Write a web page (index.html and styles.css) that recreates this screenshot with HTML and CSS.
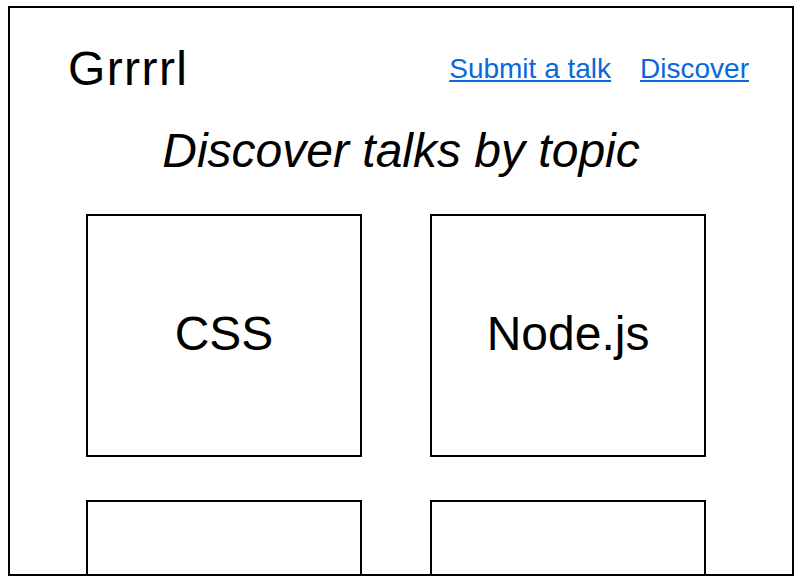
FILE: index.html
```html
<!DOCTYPE html>
<html lang="en">
<head>
<meta charset="utf-8">
<title>Grrrrl</title>
<link rel="stylesheet" href="styles.css">
</head>
<body>
<div class="frame">
  <header class="header">
    <div class="logo">Grrrrl</div>
    <nav class="nav">
      <a href="#" class="nav-link">Submit a talk</a>
      <a href="#" class="nav-link">Discover</a>
    </nav>
  </header>
  <h1 class="title">Discover talks by topic</h1>
  <div class="topics">
    <div class="topic">CSS</div>
    <div class="topic">Node.js</div>
    <div class="topic"></div>
    <div class="topic"></div>
  </div>
</div>
</body>
</html>
```

FILE: styles.css
```css
html, body {
  margin: 0;
  padding: 0;
  background: #fff;
}

body {
  font-family: "Liberation Sans", Arial, Helvetica, sans-serif;
  color: #000;
}

.frame {
  box-sizing: border-box;
  width: 786px;
  height: 570px;
  margin: 6px 0 0 8px;
  border: 2px solid #000;
  overflow: hidden;
}

.header {
  display: flex;
  align-items: center;
  justify-content: space-between;
  padding: 33px 43px 0 58px;
}

.logo {
  font-size: 48px;
  line-height: 56px;
  letter-spacing: 1.4px;
}

.nav {
  display: flex;
  gap: 29px;
}

.nav-link {
  font-size: 28px;
  line-height: 32px;
  color: #0a68dc;
  text-decoration: underline;
}

.title {
  margin: 26px 0 0 0;
  font-size: 48px;
  line-height: 56px;
  font-weight: normal;
  font-style: italic;
  text-align: center;
}

.topics {
  display: grid;
  grid-template-columns: 276px 276px;
  grid-auto-rows: 243px;
  column-gap: 68px;
  row-gap: 43px;
  padding: 35px 0 0 76px;
}

.topic {
  box-sizing: border-box;
  border: 2px solid #000;
  display: flex;
  align-items: center;
  justify-content: center;
  font-size: 48px;
  padding-bottom: 4px;
}
```
